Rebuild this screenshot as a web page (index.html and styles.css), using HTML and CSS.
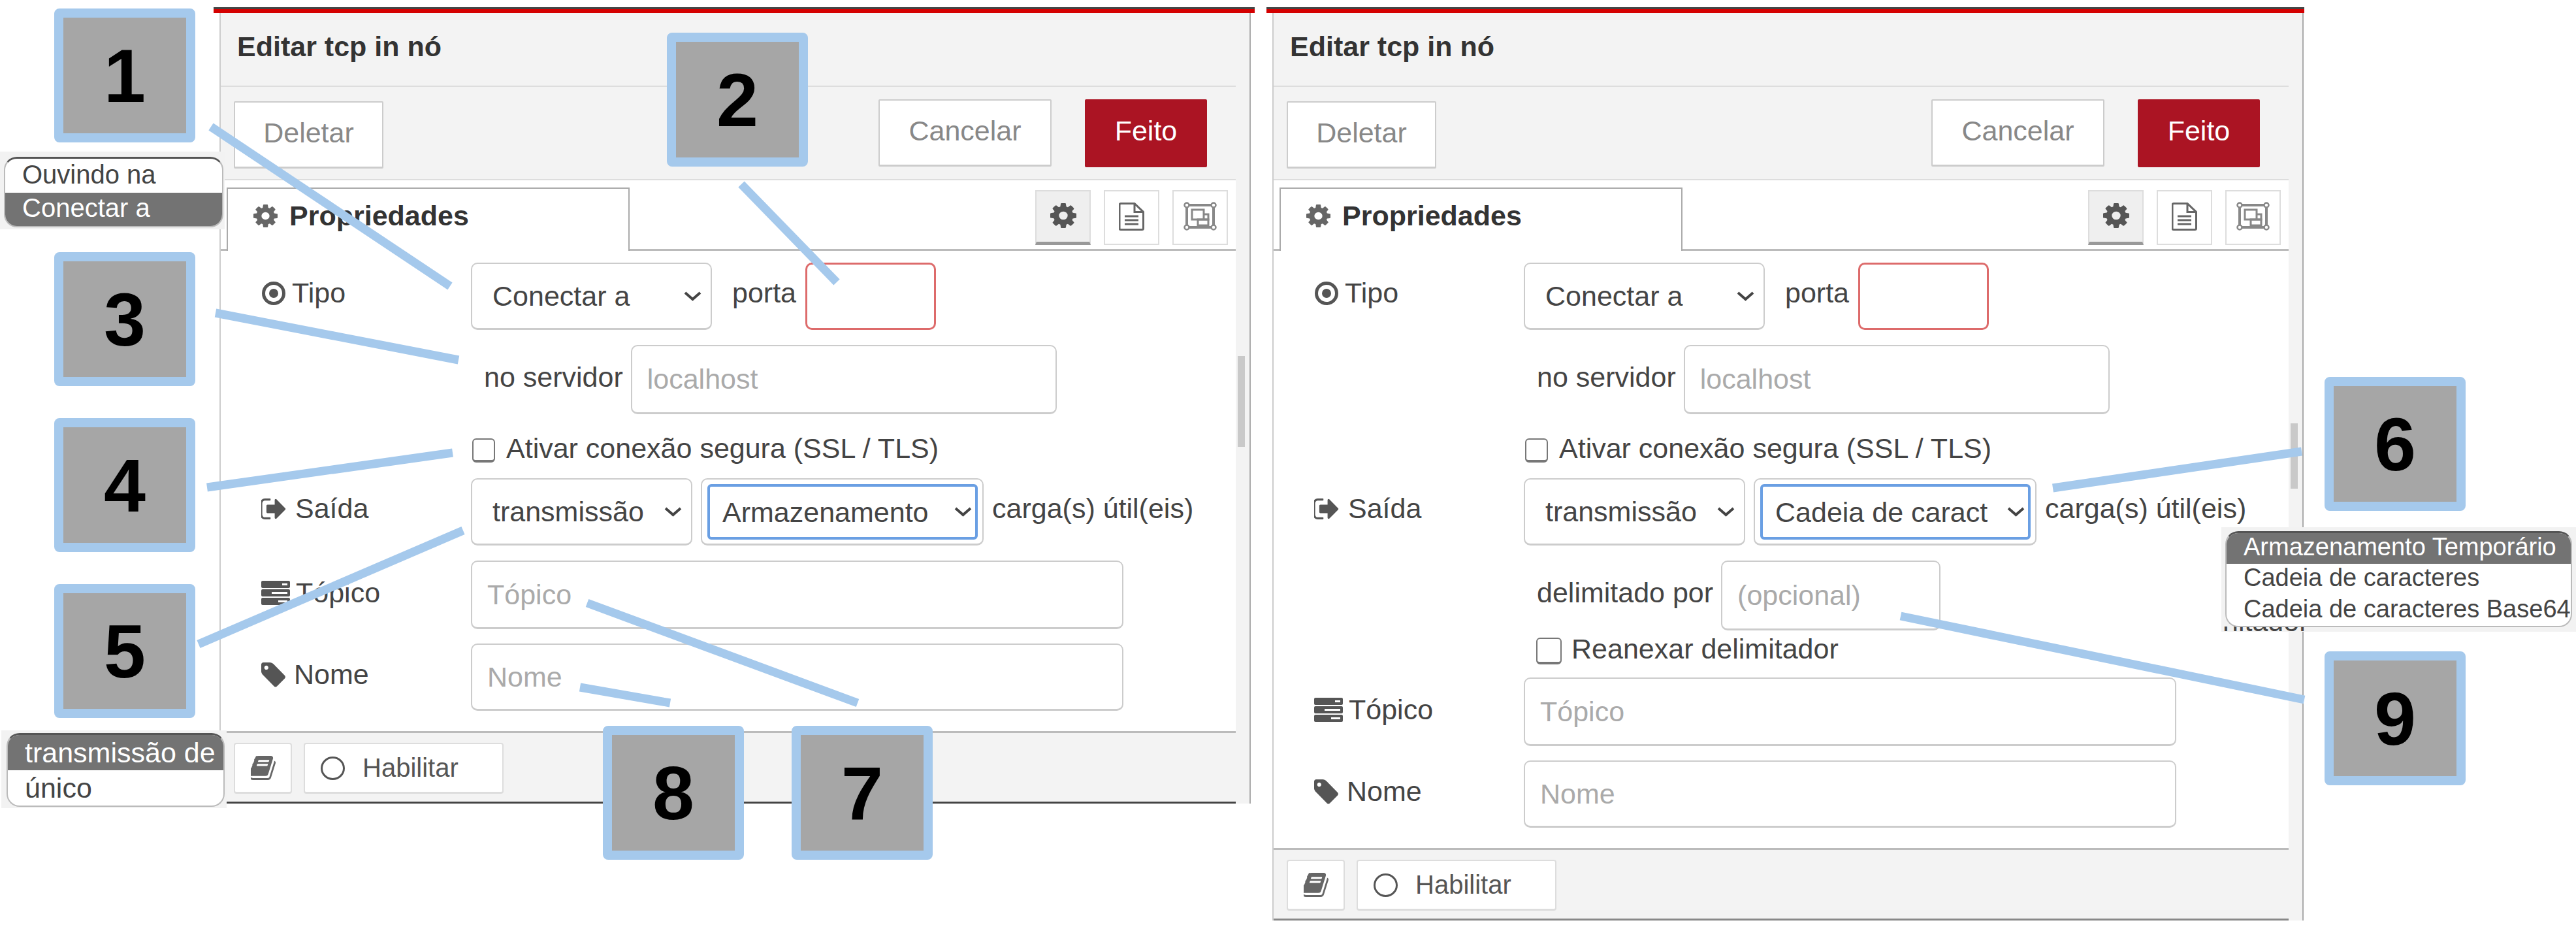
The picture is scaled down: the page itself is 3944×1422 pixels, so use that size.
FILE: index.html
```html
<!DOCTYPE html>
<html lang="pt-BR">
<head>
  <meta charset="UTF-8" />
  <title>Editar tcp in nó</title>
  <link rel="stylesheet" href="styles.css">
</head>
<body>

  <!-- icones usados nos dois paineis -->
  <svg class="sprite" xmlns="http://www.w3.org/2000/svg">
    <symbol id="i-cog" viewBox="128 128 1536 1536" preserveAspectRatio="none">
      <path d="M1152 896q0-106-75-181t-181-75-181 75-75 181 75 181 181 75 181-75 75-181zm512-109v222q0 12-8 23t-20 13l-185 28q-19 54-39 91 35 50 107 138 10 12 10 25t-9 23q-27 37-99 108t-94 71q-12 0-26-9l-138-108q-44 23-91 38-16 136-29 186-7 28-36 28h-222q-14 0-24.500-8.500t-11.500-21.500l-28-184q-49-16-90-37l-141 107q-10 9-25 9-14 0-25-11-126-114-165-168-7-10-7-23 0-12 8-23 15-21 51-66.500t54-70.500q-27-50-41-99l-183-27q-13-2-21-12.500t-8-23.500v-222q0-12 8-23t19-13l186-28q14-46 39-92-40-57-107-138-10-12-10-24 0-10 9-23 26-36 98.500-107.500t94.500-71.500q13 0 26 10l138 107q44-23 91-38 16-136 29-186 7-28 36-28h222q14 0 24.500 8.500t11.500 21.500l28 184q49 16 90 37l142-107q9-9 24-9 13 0 25 10 129 119 165 170 7 8 7 22 0 12-8 23-15 21-51 66.500t-54 70.500q26 50 41 98l183 28q13 2 21 12.500t8 23.500z"/>
    </symbol>
    <symbol id="i-dot" viewBox="0 0 38 38">
      <circle cx="19" cy="19" r="15.500" fill="none" stroke="currentColor" stroke-width="5"/>
      <circle cx="19" cy="19" r="7"/>
    </symbol>
    <symbol id="i-out" viewBox="128 256 1536 1280" preserveAspectRatio="none">
      <path d="M704 1440q0 4 1 20t.5 26.500-3 23.500-10 19.500-20.500 6.500h-320q-119 0-203.500-84.500t-84.500-203.500v-704q0-119 84.500-203.500t203.500-84.500h320q13 0 22.500 9.500t9.500 22.500q0 4 1 20t.5 26.500-3 23.500-10 19.500-20.500 6.500h-320q-66 0-113 47t-47 113v704q0 66 47 113t113 47h312l11.500 1 11.500 3 8 5.500 7 9 2 13.500zm928-544q0 26-19 45l-544 544q-19 19-45 19t-45-19-19-45v-288h-448q-26 0-45-19t-19-45v-384q0-26 19-45t45-19h448v-288q0-26 19-45t45-19 45 19l544 544q19 19 19 45z"/>
    </symbol>
    <symbol id="i-tasks" viewBox="0 0 44 37">
      <path d="M2 0h40a2 2 0 0 1 2 2v7a2 2 0 0 1-2 2H2a2 2 0 0 1-2-2V2a2 2 0 0 1 2-2zm30 4v3h8V4zM2 13h40a2 2 0 0 1 2 2v7a2 2 0 0 1-2 2H2a2 2 0 0 1-2-2v-7a2 2 0 0 1 2-2zm14 4v3h24v-3zM2 26h40a2 2 0 0 1 2 2v7a2 2 0 0 1-2 2H2a2 2 0 0 1-2-2v-7a2 2 0 0 1 2-2zm24 4v3h14v-3z"/>
    </symbol>
    <symbol id="i-tag" viewBox="128 128 1520 1536" preserveAspectRatio="none">
      <path d="M576 448q0-53-37.500-90.500t-90.500-37.500-90.500 37.500-37.500 90.500 37.500 90.500 90.500 37.500 90.500-37.500 37.500-90.500zm1067 576q0 53-37 90l-491 492q-39 37-91 37-53 0-90-37l-715-716q-38-37-64.500-101t-26.500-117v-416q0-52 38-90t90-38h416q53 0 117 26.500t102 64.500l715 714q37 39 37 91z"/>
    </symbol>
    <symbol id="i-book" viewBox="128 128 1536 1536" preserveAspectRatio="none">
      <path d="M1639 478q40 57 18 129l-275 906q-19 64-76.500 107.500t-122.500 43.500h-923q-77 0-148.500-53.500t-99.500-131.500q-24-67-2-127 0-4 3-27t4-37q1-8-3-21.500t-3-19.500q2-11 8-21t16.500-23.500 16.500-23.500q23-38 45-91.500t30-91.500q3-10 .5-30t-.5-28q3-11 17-28t17-23q21-36 42-92t25-90q1-9-2.500-32t.5-28q4-13 22-30.500t22-22.500q19-26 42.500-84.500t27.500-96.500q1-8-3-25.500t-2-26.500q2-8 9-18t18-23 17-21q8-12 16.500-30.500t15-35 16-36 19.500-32 26.500-23.500 36-11.500 47.500 5.500l-1 3q38-9 51-9h761q74 0 114 56t18 130l-274 906q-36 119-71.500 153.500t-128.500 34.500h-869q-27 0-38 15-11 16-1 43 24 70 144 70h923q29 0 56-15.500t35-41.500l300-987q7-22 5-57 38 15 59 43zm-1064 2q-4 13 2 22.500t20 9.500h608q13 0 25.500-9.500t16.500-22.500l21-64q4-13-2-22.500t-20-9.500h-608q-13 0-25.500 9.500t-16.500 22.500zm-83 256q-4 13 2 22.500t20 9.500h608q13 0 25.500-9.500t16.500-22.500l21-64q4-13-2-22.500t-20-9.500h-608q-13 0-25.500 9.500t-16.500 22.500z"/>
    </symbol>
    <symbol id="i-file" viewBox="0 0 39 43">
      <path d="M3 1.500h21l13.500 13v25a2 2 0 0 1-2 2H3a2 2 0 0 1-2-2v-36a2 2 0 0 1 2-2zM24 1.500v13h13.500M9 21h21M9 27h21M9 33h21" fill="none" stroke="currentColor" stroke-width="3"/>
    </symbol>
    <symbol id="i-group" viewBox="0 0 51 44">
      <path d="M5 5h41M5 39h41M5 5v34M46 5v34" fill="none" stroke="currentColor" stroke-width="4"/>
      <path d="M13 12h18v15H13zM22 27h16V19h-7" fill="none" stroke="currentColor" stroke-width="3"/>
      <path d="M22 27v9h16v-9z" fill="none" stroke="currentColor" stroke-width="3"/>
      <g fill="#fff" stroke="currentColor" stroke-width="2.500">
        <circle cx="5" cy="5" r="3.500"/><circle cx="46" cy="5" r="3.500"/><circle cx="5" cy="39" r="3.500"/><circle cx="46" cy="39" r="3.500"/>
      </g>
    </symbol>
  </svg>

  <!-- Painel esquerdo -->
  <section class="panel panel-left">
    <div class="panel-bar"></div>
    <div class="frame">
      <div class="main">
        <header class="head"><h1>Editar tcp in nó</h1></header>
        <div class="toolbar">
          <button class="btn btn-delete">Deletar</button>
          <div class="toolbar-right">
            <button class="btn btn-cancel">Cancelar</button>
            <button class="btn btn-done">Feito</button>
          </div>
        </div>
        <div class="tabs">
          <div class="tab"><svg class="tab-icon"><use href="#i-cog"/></svg>Propriedades</div>
          <div class="side-btns">
            <div class="side-btn active"><svg class="side-cog"><use href="#i-cog"/></svg></div>
            <div class="side-btn"><svg class="side-file"><use href="#i-file"/></svg></div>
            <div class="side-btn"><svg class="side-group"><use href="#i-group"/></svg></div>
          </div>
        </div>
        <form class="form">
          <div class="row row-first">
            <label class="label"><svg class="ico ico-dot"><use href="#i-dot"/></svg>Tipo</label>
            <select class="select sel-type"><option>Conectar a</option></select>
            <span class="word word-port">porta</span>
            <input class="input input-port" type="text" />
          </div>
          <div class="row row-tall row-sub">
            <span class="word word-server">no servidor</span>
            <input class="input input-host" type="text" placeholder="localhost" />
          </div>
          <div class="row row-check">
            <input class="check" type="checkbox" id="tls1" />
            <label class="check-text" for="tls1">Ativar conexão segura (SSL / TLS)</label>
          </div>
          <div class="row">
            <label class="label"><svg class="ico ico-out"><use href="#i-out"/></svg>Saída</label>
            <select class="select sel-mode"><option>transmissão</option></select>
            <div class="select-wrap"><select class="select sel-focus"><option>Armazenamento</option></select></div>
            <span class="word">carga(s) útil(eis)</span>
          </div>
          <div class="row row-topic">
            <label class="label"><svg class="ico ico-tasks"><use href="#i-tasks"/></svg>Tópico</label>
            <input class="input input-wide" type="text" placeholder="Tópico" />
          </div>
          <div class="row row-last">
            <label class="label"><svg class="ico ico-tag"><use href="#i-tag"/></svg>Nome</label>
            <input class="input input-wide" type="text" placeholder="Nome" />
          </div>
        </form>
        <footer class="foot foot-dark">
          <div class="foot-btn foot-book"><svg class="ico-book"><use href="#i-book"/></svg></div>
          <div class="foot-btn foot-enable"><span class="ring"></span>Habilitar</div>
        </footer>
      </div>
      <div class="track"><div class="thumb"></div></div>
    </div>
  </section>

  <!-- Painel direito -->
  <section class="panel panel-right">
    <div class="panel-bar"></div>
    <div class="frame">
      <div class="main">
        <header class="head"><h1>Editar tcp in nó</h1></header>
        <div class="toolbar">
          <button class="btn btn-delete">Deletar</button>
          <div class="toolbar-right">
            <button class="btn btn-cancel">Cancelar</button>
            <button class="btn btn-done">Feito</button>
          </div>
        </div>
        <div class="tabs">
          <div class="tab"><svg class="tab-icon"><use href="#i-cog"/></svg>Propriedades</div>
          <div class="side-btns">
            <div class="side-btn active"><svg class="side-cog"><use href="#i-cog"/></svg></div>
            <div class="side-btn"><svg class="side-file"><use href="#i-file"/></svg></div>
            <div class="side-btn"><svg class="side-group"><use href="#i-group"/></svg></div>
          </div>
        </div>
        <form class="form">
          <div class="row row-first">
            <label class="label"><svg class="ico ico-dot"><use href="#i-dot"/></svg>Tipo</label>
            <select class="select sel-type"><option>Conectar a</option></select>
            <span class="word word-port">porta</span>
            <input class="input input-port" type="text" />
          </div>
          <div class="row row-tall row-sub">
            <span class="word word-server">no servidor</span>
            <input class="input input-host" type="text" placeholder="localhost" />
          </div>
          <div class="row row-check">
            <input class="check" type="checkbox" id="tls2" />
            <label class="check-text" for="tls2">Ativar conexão segura (SSL / TLS)</label>
          </div>
          <div class="row">
            <label class="label"><svg class="ico ico-out"><use href="#i-out"/></svg>Saída</label>
            <select class="select sel-mode"><option>transmissão</option></select>
            <div class="select-wrap"><select class="select sel-focus"><option>Cadeia de caract</option></select></div>
            <span class="word">carga(s) útil(eis)</span>
          </div>
          <div class="row row-delim row-sub">
            <span class="word word-server">delimitado por</span>
            <input class="input input-delim" type="text" placeholder="(opcional)" />
          </div>
          <div class="row row-reattach">
            <input class="check check-big" type="checkbox" id="reanexar" />
            <label class="check-text" for="reanexar">Reanexar delimitador</label>
          </div>
          <div class="row row-topic">
            <label class="label"><svg class="ico ico-tasks"><use href="#i-tasks"/></svg>Tópico</label>
            <input class="input input-wide" type="text" placeholder="Tópico" />
          </div>
          <div class="row row-last">
            <label class="label"><svg class="ico ico-tag"><use href="#i-tag"/></svg>Nome</label>
            <input class="input input-wide" type="text" placeholder="Nome" />
          </div>
        </form>
        <footer class="foot foot-grey">
          <div class="foot-btn foot-book"><svg class="ico-book"><use href="#i-book"/></svg></div>
          <div class="foot-btn foot-enable"><span class="ring"></span>Habilitar</div>
        </footer>
      </div>
      <div class="track"><div class="thumb"></div></div>
    </div>
  </section>

  <!-- Linhas das anotacoes -->
  <svg class="leaders" viewBox="0 0 3944 1422" xmlns="http://www.w3.org/2000/svg">
    <line x1="323" y1="194" x2="689" y2="438"/>
    <line x1="1135" y1="282" x2="1281" y2="432"/>
    <line x1="330" y1="479" x2="702" y2="551"/>
    <line x1="317" y1="746" x2="693" y2="693"/>
    <line x1="304" y1="986" x2="709" y2="812"/>
    <line x1="899" y1="923" x2="1313" y2="1076"/>
    <line x1="888" y1="1052" x2="1026" y2="1076"/>
    <line x1="3143" y1="747" x2="3524" y2="691"/>
    <line x1="2910" y1="943" x2="3528" y2="1071"/>
  </svg>

  <!-- Numeros -->
  <div class="callout c1">1</div>
  <div class="callout c2">2</div>
  <div class="callout c3">3</div>
  <div class="callout c4">4</div>
  <div class="callout c5">5</div>
  <div class="callout c6">6</div>
  <div class="callout c7">7</div>
  <div class="callout c8">8</div>
  <div class="callout c9">9</div>

  <!-- Listas abertas coladas sobre a imagem -->
  <div class="patch patch-type">
    <div class="menu">
      <div class="menu-item">Ouvindo na</div>
      <div class="menu-item selected">Conectar a</div>
    </div>
  </div>
  <div class="patch patch-mode">
    <div class="menu">
      <div class="menu-item selected">transmissão de</div>
      <div class="menu-item">único</div>
    </div>
  </div>
  <div class="patch patch-format">
    <div class="menu-peek"><span>nitador</span></div>
    <div class="menu">
      <div class="menu-item selected">Armazenamento Temporário</div>
      <div class="menu-item">Cadeia de caracteres</div>
      <div class="menu-item">Cadeia de caracteres Base64</div>
    </div>
  </div>

</body>
</html>
```

FILE: styles.css
```css
/* Base */
html, body {
  margin: 0;
  padding: 0;
}

body {
  position: relative;
  width: 3944px;
  height: 1422px;
  overflow: hidden;
  background-color: white;
  font-family: "Liberation Sans", Arial, sans-serif;
  font-size: 43px;
  color: #444;
}

.sprite {
  display: none;
}

svg {
  fill: currentColor;
}

/* Paineis (janelas soltas na imagem) */
.panel {
  position: absolute;
  top: 11px;
}

.panel-left {
  left: 327px;
  width: 1594px;
}

.panel-right {
  left: 1939px;
  width: 1589px;
}

.panel-bar {
  height: 6px;
  border-top: 3px solid #444;
  background-color: #d40000;
}

.frame {
  display: flex;
  width: 1575px;
  margin-left: 9px;
  background-color: #f3f3f3;
  border-left: 2px solid #ccc;
  border-right: 2px solid #aaa;
}

.main {
  width: 1554px;
  display: flex;
  flex-direction: column;
}

.track {
  width: 21px;
}

.thumb {
  width: 11px;
  margin-left: 3px;
  background-color: #c9c9c9;
}

.panel-left .thumb {
  height: 139px;
  margin-top: 525px;
}

.panel-right .thumb {
  height: 100px;
  margin-top: 628px;
}

/* Cabecalho */
.head {
  height: 113px;
  box-sizing: border-box;
  padding: 0 0 8px 25px;
  display: flex;
  align-items: center;
  border-bottom: 2px solid #ddd;
}

.head h1 {
  margin: 0;
  font-size: 43px;
  font-weight: 700;
  color: #333;
}

.toolbar {
  height: 143px;
  box-sizing: border-box;
  padding: 22px 44px 0 20px;
  display: flex;
  justify-content: space-between;
  align-items: flex-start;
  border-bottom: 2px solid #ddd;
}

.toolbar-right {
  display: flex;
  gap: 51px;
  margin-top: -3px;
}

.btn {
  height: 103px;
  padding: 0 0 6px;
  font-family: inherit;
  font-size: 43px;
  background-color: white;
  color: #888;
  border: 2px solid #ccc;
  border-bottom-width: 3px;
  border-radius: 2px;
}

.btn-delete {
  width: 229px;
}

.btn-cancel {
  width: 265px;
}

.btn-done {
  width: 187px;
  height: 104px;
  background-color: #ab1423;
  border-color: #ab1423;
  color: white;
}

/* Abas */
.tabs {
  height: 108px;
  box-sizing: border-box;
  padding: 0 12px 0 9px;
  display: flex;
  justify-content: space-between;
  align-items: flex-end;
  background-color: white;
  border-bottom: 3px solid #bbb;
}

.tab {
  width: 617px;
  height: 97px;
  box-sizing: border-box;
  margin-bottom: -3px;
  padding: 0 0 13px 39px;
  display: flex;
  align-items: center;
  gap: 18px;
  font-weight: 700;
  color: #333;
  background-color: white;
  border: 2px solid #aaa;
  border-bottom: none;
}

.tab-icon {
  width: 37px;
  height: 35px;
  color: #666;
}

.side-btns {
  display: flex;
  gap: 20px;
  margin-bottom: 6px;
}

.side-btn {
  width: 85px;
  height: 84px;
  box-sizing: border-box;
  display: flex;
  align-items: center;
  justify-content: center;
  padding-bottom: 4px;
  background-color: white;
  border: 2px solid #ddd;
  color: #666;
}

.side-btn.active {
  background-color: #efefef;
  border-bottom: 5px solid #999;
  color: #555;
}

.side-cog {
  width: 40px;
  height: 38px;
}

.side-file {
  width: 39px;
  height: 43px;
}

.side-group {
  width: 51px;
  height: 44px;
  color: #888;
}

/* Formulario */
.form {
  flex: 1;
  box-sizing: border-box;
  padding: 18px 0 31px 62px;
  background-color: white;
}

.row {
  display: flex;
  align-items: center;
  height: 103px;
  margin-bottom: 23px;
}

.row-tall {
  height: 106px;
}

.row-sub {
  padding-left: 321px;
}

.row-check {
  height: 37px;
  margin-top: 37px;
  margin-bottom: 24px;
  padding-left: 323px;
}

.row-delim {
  height: 107px;
  margin-bottom: 11px;
}

.row-reattach {
  height: 41px;
  margin-bottom: 20px;
  padding-left: 340px;
}

.row-topic {
  height: 105px;
  margin-bottom: 22px;
}

.row-last {
  margin-bottom: 0;
}

.label {
  width: 321px;
  flex: none;
  display: flex;
  align-items: center;
  gap: 9px;
  margin-bottom: 10px;
}

.row-topic .label {
  margin-bottom: 6px;
}

.row-last .label {
  margin-bottom: 8px;
}

.ico {
  flex: none;
  color: #555;
}

.ico-dot {
  width: 38px;
  height: 38px;
}

.ico-out {
  width: 38px;
  height: 32px;
  margin-right: 5px;
}

.ico-tasks {
  width: 44px;
  height: 37px;
}

.ico-tag {
  width: 37px;
  height: 38px;
  margin-right: 4px;
}

.word {
  margin-left: 13px;
  margin-bottom: 10px;
  white-space: nowrap;
}

.word-port {
  margin-left: 31px;
  margin-right: 14px;
}

.word-server {
  margin-left: 20px;
  margin-right: 12px;
  margin-bottom: 8px;
}

.select,
.input {
  box-sizing: border-box;
  height: 100%;
  font-family: inherit;
  font-size: 43px;
  color: #444;
  background-color: white;
  border: 2px solid #ccc;
  border-bottom-width: 3px;
  border-radius: 10px;
  outline: none;
}

.select {
  appearance: none;
  padding: 0 50px 0 31px;
  background-repeat: no-repeat;
  background-position: right 14px center;
  background-size: 27px 15px;
  background-image: url("data:image/svg+xml,%3Csvg xmlns='http://www.w3.org/2000/svg' viewBox='0 0 27 15'%3E%3Cpath d='M2 2l11.500 10L25 2' fill='none' stroke='%23444' stroke-width='4'/%3E%3C/svg%3E");
}

.input {
  padding: 0 23px;
}

.input::placeholder {
  color: #aaa;
  opacity: 1;
}

.sel-type {
  width: 369px;
}

.sel-mode {
  width: 339px;
}

.select-wrap {
  width: 433px;
  height: 100%;
  box-sizing: border-box;
  margin-left: 13px;
  padding: 7px 7px 6px 8px;
  border: 2px solid #ccc;
  border-bottom-width: 3px;
  border-radius: 10px;
}

.sel-focus {
  width: 100%;
  padding-left: 19px;
  background-position: right 5px center;
  border: 4px solid #6a9fe3;
  border-radius: 6px;
}

.input-port {
  width: 200px;
  border: 3px solid #dd6b6b;
}

.input-host {
  width: 652px;
}

.input-delim {
  width: 336px;
}

.input-wide {
  width: 999px;
}

.check {
  appearance: none;
  flex: none;
  width: 35px;
  height: 37px;
  margin: 0 17px 0 0;
  background-color: white;
  border: 2px solid #777;
  border-bottom-width: 4px;
  border-radius: 6px;
}

.check-big {
  width: 39px;
  height: 41px;
  margin-right: 15px;
}

.check-text {
  white-space: nowrap;
  margin-bottom: 6px;
}

/* Rodape */
.foot {
  height: 111px;
  box-sizing: border-box;
  padding: 15px 0 0 20px;
  display: flex;
  align-items: flex-start;
  gap: 18px;
  border-top: 3px solid #bbb;
  border-bottom: 3px solid #888;
}

.foot-dark {
  border-bottom-color: #444;
}

.foot-btn {
  height: 78px;
  box-sizing: border-box;
  display: flex;
  align-items: center;
  background-color: white;
  border: 2px solid #ddd;
  border-bottom-width: 3px;
  border-radius: 4px;
  color: #555;
}

.foot-book {
  width: 89px;
  justify-content: center;
}

.ico-book {
  width: 38px;
  height: 37px;
  color: #666;
}

.foot-enable {
  width: 306px;
  padding-left: 24px;
  gap: 27px;
  font-size: 40px;
}

.ring {
  width: 37px;
  height: 36px;
  box-sizing: border-box;
  border: 3px solid #555;
  border-radius: 50%;
}

/* Linhas das anotacoes */
.leaders {
  position: absolute;
  left: 0;
  top: 0;
  width: 3944px;
  height: 1422px;
  pointer-events: none;
}

.leaders line {
  stroke: #a5c9ec;
  stroke-width: 13;
}

/* Numeros */
.callout {
  position: absolute;
  width: 216px;
  height: 205px;
  box-sizing: border-box;
  display: flex;
  align-items: center;
  justify-content: center;
  background-color: #a6a6a6;
  border: 14px solid #a5c9ec;
  border-radius: 8px;
  font-size: 115px;
  font-weight: 700;
  color: black;
}

.c1 { left: 83px; top: 13px; }
.c2 { left: 1021px; top: 50px; }
.c3 { left: 83px; top: 386px; }
.c4 { left: 83px; top: 640px; }
.c5 { left: 83px; top: 894px; }
.c6 { left: 3559px; top: 577px; }
.c7 { left: 1212px; top: 1111px; }
.c8 { left: 923px; top: 1111px; }
.c9 { left: 3559px; top: 997px; }

/* Listas abertas */
.patch {
  position: absolute;
  box-sizing: border-box;
  background-color: #f2f2f2;
}

.patch-type {
  left: 0;
  top: 232px;
  width: 344px;
  height: 119px;
  padding: 8px 2px 3px 6px;
  font-size: 40px;
}

.patch-type .menu-item {
  padding-bottom: 3px;
}

.patch-mode {
  left: 2px;
  top: 1118px;
  width: 345px;
  height: 119px;
  padding: 4px 3px 2px 8px;
}

.patch-format {
  left: 3401px;
  top: 807px;
  width: 543px;
  height: 160px;
  padding: 6px 6px 7px 6px;
  font-size: 38px;
}

.patch-format .menu-item {
  padding-bottom: 4px;
}

.menu-peek {
  position: absolute;
  left: 2px;
  bottom: 0;
  height: 8px;
  overflow: hidden;
  font-size: 43px;
  line-height: 8px;
}

.menu-peek span {
  display: block;
  margin-top: -12px;
}

.menu {
  position: relative;
  height: 100%;
  box-sizing: border-box;
  display: flex;
  flex-direction: column;
  overflow: hidden;
  background-color: white;
  border: 2px solid #bbb;
  border-top: 3px solid #555;
  border-radius: 20px;
  color: #444;
}

.menu-item {
  flex: 1;
  display: flex;
  align-items: center;
  padding-left: 26px;
  white-space: nowrap;
}

.menu-item.selected {
  background-color: #737373;
  color: white;
}
```
